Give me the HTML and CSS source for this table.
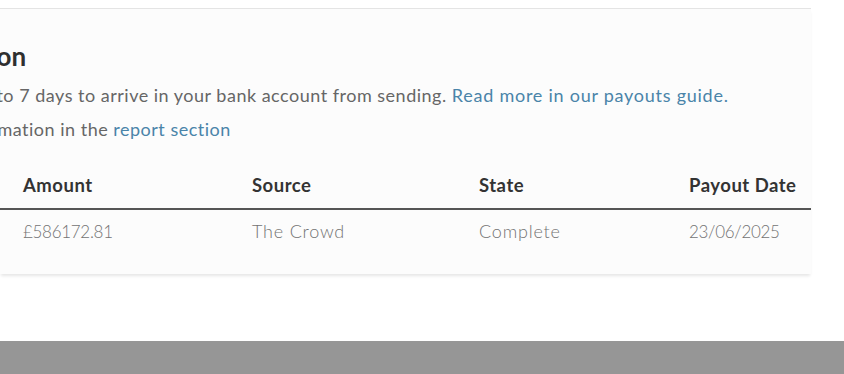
FILE: index.html
```html
<!DOCTYPE html>
<html lang="en">
<head>
<meta charset="utf-8">
<title>Payouts</title>
<link rel="stylesheet" href="styles.css">
</head>
<body>
<div class="viewport">
  <section class="card">
    <div class="intro">
      <h2 class="title">Payout information</h2>
      <p class="line line-first">Payouts can take up to 7 days to arrive in your bank account from sending. <a href="#" class="link">Read more in our payouts guide.</a></p>
      <p class="line line-second">You can find more information in the <a href="#" class="link">report section</a></p>
    </div>
    <div class="table">
      <div class="row head">
        <div class="cell">Amount</div>
        <div class="cell">Source</div>
        <div class="cell">State</div>
        <div class="cell">Payout Date</div>
      </div>
      <div class="row body">
        <div class="cell num">£586172.81</div>
        <div class="cell">The Crowd</div>
        <div class="cell">Complete</div>
        <div class="cell num">23/06/2025</div>
      </div>
    </div>
  </section>
  <footer class="footer"></footer>
</div>
</body>
</html>
```
FILE: styles.css
```css
html, body {
  margin: 0;
  padding: 0;
  background: #ffffff;
}

body {
  font-family: Lato, "Open Sans", sans-serif;
  overflow: hidden;
}

.viewport {
  width: 844px;
  height: 374px;
  overflow: hidden;
  padding-top: 8px;
  box-sizing: border-box;
  display: flex;
  flex-direction: column;
}

.card {
  width: 811px;
  background: #fcfcfc;
  border-top: 1px solid #e4e4e4;
  box-shadow: 0 3px 3px -1px rgba(0, 0, 0, 0.10);
  padding-bottom: 20px;
}

.intro {
  padding-top: 30px;
  white-space: nowrap;
}

.title {
  margin: 0 0 0 -197px;
  font-size: 26px;
  font-weight: 700;
  color: #2f2f2f;
  line-height: 34px;
}

.line {
  margin: 0;
  font-size: 18px;
  letter-spacing: 0.5px;
  line-height: 34px;
  color: #666666;
}

.line-first {
  margin-top: 5px;
  margin-left: -176px;
}

.line-first .link {
  letter-spacing: 0.75px;
}

.line-second {
  margin-left: -198px;
}

.link {
  color: #4a84a9;
  text-decoration: none;
}

.table {
  margin-top: 28px;
}

.row {
  display: grid;
  grid-template-columns: 229px 227px 210px 1fr;
  align-items: baseline;
  padding-left: 23px;
}

.row.head {
  border-bottom: 2px solid #555555;
  font-weight: 700;
  color: #333333;
  font-size: 18.5px;
  letter-spacing: 0.5px;
  padding-bottom: 12px;
}

.row.body {
  font-weight: 300;
  color: #737373;
  font-size: 18px;
  letter-spacing: 0.8px;
  padding-top: 10px;
  padding-bottom: 12px;
}

.row.body .num {
  font-size: 17px;
  letter-spacing: -0.3px;
}

.footer {
  margin-top: auto;
  height: 33px;
  background: #969696;
}
```
